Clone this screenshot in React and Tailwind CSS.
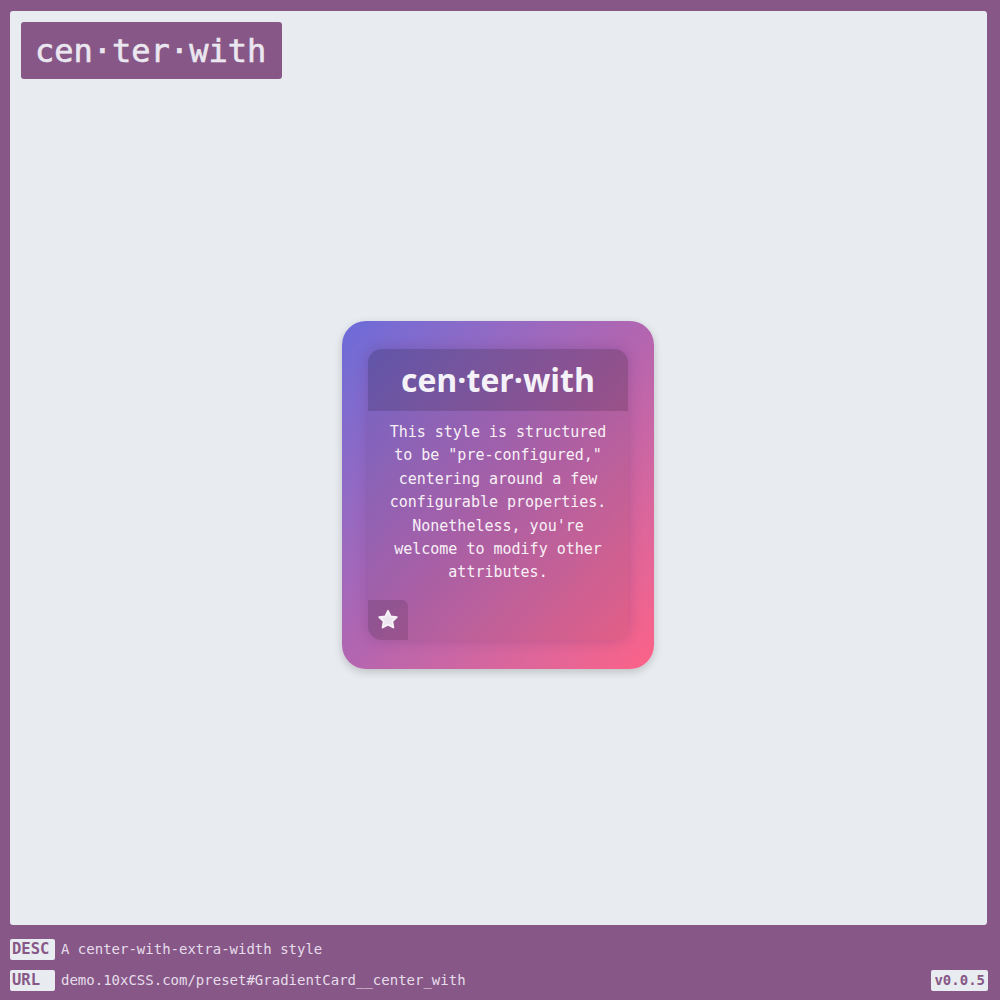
import React from "react";

const mono = { fontFamily: '"DejaVu Sans Mono", "Liberation Mono", monospace' };

function Star() {
  return (
    <svg width="24" height="24" viewBox="0 0 24 24">
      <path
        d="M12 2.8l2.7 5.6 6.1.8-4.5 4.2 1.1 6.1L12 16.6l-5.4 2.9 1.1-6.1-4.5-4.2 6.1-.8z"
        fill="#ece4ee"
        stroke="#f7f2f8"
        strokeWidth="1.8"
        strokeLinejoin="round"
      />
    </svg>
  );
}

export default function App() {
  return (
    <div className="w-[1000px] h-[1000px] bg-[#875887] flex flex-col" style={mono}>
      <div className="mx-[10px] mt-[11px] h-[914px] w-[977px] bg-[#e8ebef] rounded-[3px] relative">
        <div className="absolute left-[11px] top-[11px] w-[261px] h-[57px] bg-[#875887] rounded-[3px] flex items-center pl-[14px]">
          <span className="text-[32px] font-normal text-[#ebe7f0] leading-none [-webkit-text-stroke:0.6px_#ebe7f0]">cen·ter·with</span>
        </div>
        <div className="h-full flex items-center justify-center">
          <div className="w-[312px] h-[348px] mt-[54px] ml-[-1px] rounded-[24px] bg-gradient-to-br from-[#6b6bd9] via-[#b365b0] to-[#fd6287] shadow-[0_3px_8px_rgba(0,0,0,0.18)] flex flex-col items-center pt-[28px]">
            <div className="w-[260px] h-[291px] rounded-[14px] bg-black/[0.06] shadow-[0_0_14px_rgba(80,40,100,0.25)] flex flex-col overflow-hidden">
              <div className="h-[62px] bg-black/[0.14] flex items-center justify-center">
                <span
                  className="text-[32px] font-bold text-[#f4f2f8] leading-none"
                  style={{ fontFamily: '"Open Sans", "Noto Sans", sans-serif' }}
                >
                  cen·ter·with
                </span>
              </div>
              <p className="text-[15px] leading-[23.4px] text-[#f8f0f6] text-center px-[12px] pt-[10px]">
                This style is structured to be "pre-configured," centering around a few configurable properties.
                Nonetheless, you're welcome to modify other attributes.
              </p>
              <div className="mt-auto w-[40px] h-[40px] bg-black/[0.12] rounded-tr-[6px] flex items-center justify-center">
                <Star />
              </div>
            </div>
          </div>
        </div>
      </div>
      <div className="flex-1 px-[10px] pt-[14px] text-[14px] text-[#e6dcea]">
        <div className="flex items-center h-[21px]">
          <span className="bg-[#e8ebef] text-[#875887] font-bold text-[15.5px] pl-[2px] w-[45px] h-[21px] leading-[21px] rounded-[2px]">DESC</span>
          <span className="ml-[6px]">A center-with-extra-width style</span>
        </div>
        <div className="flex items-center h-[21px] mt-[10px]">
          <span className="bg-[#e8ebef] text-[#875887] font-bold text-[15.5px] pl-[2px] w-[45px] h-[21px] leading-[21px] rounded-[2px]">URL</span>
          <span className="ml-[6px]">demo.10xCSS.com/preset#GradientCard__center_with</span>
          <span className="ml-auto mr-[2px] bg-[#e8ebef] text-[#875887] font-bold text-[14px] px-[3px] h-[21px] leading-[21px] rounded-[2px]">v0.0.5</span>
        </div>
      </div>
    </div>
  );
}
